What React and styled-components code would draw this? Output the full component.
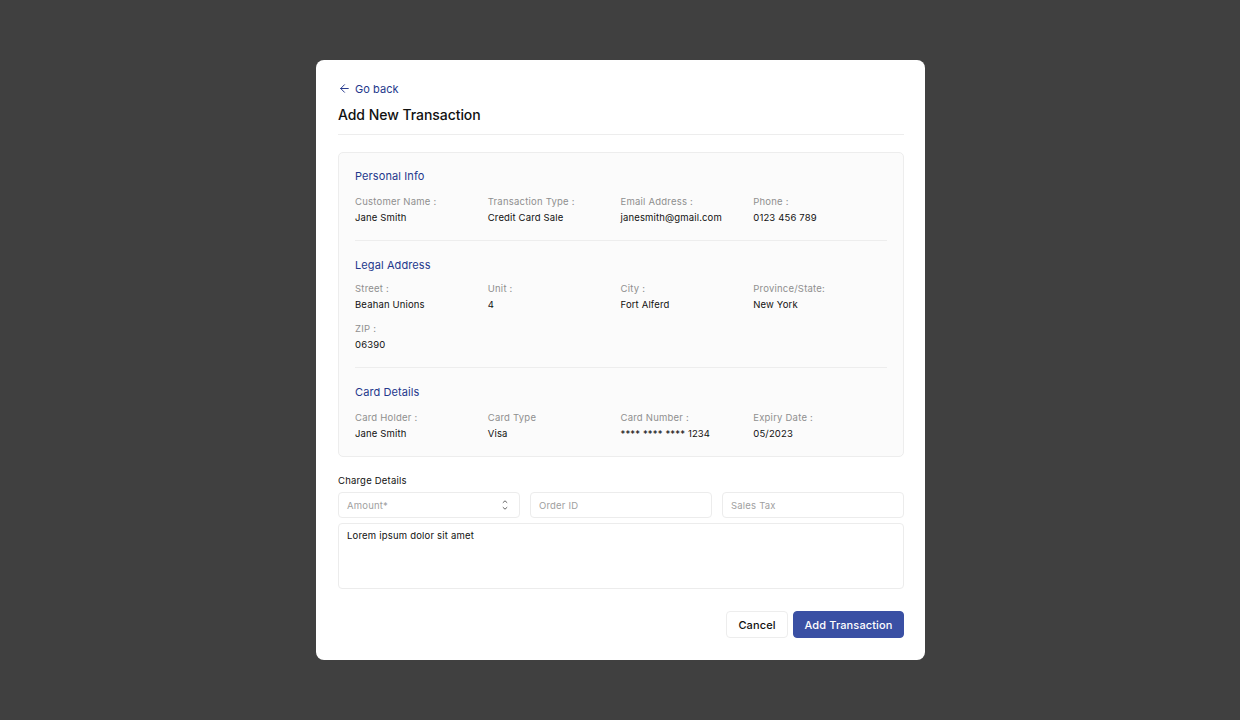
import React from 'react';
import styled, { createGlobalStyle } from 'styled-components';
import { ArrowLeft } from 'lucide-react';

const GlobalStyle = createGlobalStyle`
  html, body {
    margin: 0;
    padding: 0;
    height: 100%;
  }
  body {
    background-color: #404040;
    font-family: Inter, "Liberation Sans", sans-serif;
  }
  * {
    box-sizing: border-box;
  }
`;

const Page = styled.div`
  width: 100%;
  height: 720px;
  display: flex;
  align-items: center;
  justify-content: center;
  padding-left: 1px;
`;

const Modal = styled.div`
  width: 609px;
  height: 600px;
  background-color: #fff;
  border-radius: 8px;
  padding: 20px 21px 22px 22px;
  display: flex;
  flex-direction: column;
`;

const BackLink = styled.a`
  display: flex;
  align-items: center;
  gap: 4px;
  height: 17px;
  font-size: 11px;
  color: #24388c;
  letter-spacing: 0.05px;
`;

const Title = styled.h1`
  margin: 8px 0 0;
  font-size: 14px;
  line-height: 20px;
  font-weight: 500;
  color: #111;
  letter-spacing: -0.05px;
`;

const Divider = styled.div`
  height: 1px;
  background-color: #ededed;
  margin-top: 9px;
`;

const InfoCard = styled.div`
  margin-top: 17px;
  height: 305px;
  background-color: #fbfbfb;
  border: 1px solid #ededed;
  border-radius: 5px;
  padding: 15px 16px 0;
  display: flex;
  flex-direction: column;
`;

const SectionTitle = styled.h2`
  margin: 0;
  font-size: 11px;
  line-height: 16px;
  font-weight: 400;
  color: #24388c;
  letter-spacing: 0.1px;
`;

const FieldGrid = styled.div`
  display: grid;
  grid-template-columns: repeat(4, 132.75px);
  row-gap: 9px;
  margin-top: ${(p) => p.$top}px;
`;

const Field = styled.div`
  display: flex;
  flex-direction: column;
  gap: 2px;
`;

const Label = styled.span`
  font-size: 9.5px;
  line-height: 13px;
  color: #8f8f8f;
  letter-spacing: 0.22px;
`;

const Value = styled.span`
  font-size: 9.5px;
  line-height: 16px;
  color: #111;
  letter-spacing: 0.15px;
`;

const SectionLine = styled.div`
  height: 1px;
  background-color: #ededed;
  margin: 14px 0 16px;
`;

const ChargeLabel = styled.div`
  margin-top: 17px;
  font-size: 9.5px;
  line-height: 14px;
  color: #111;
  letter-spacing: 0.2px;
`;

const InputRow = styled.div`
  display: grid;
  grid-template-columns: 182px 182px 182px;
  justify-content: space-between;
  margin-top: 4px;
`;

const InputBox = styled.div`
  height: 26px;
  background-color: #fff;
  border: 1px solid #ececec;
  border-radius: 4px;
  padding: 0 8px;
  display: flex;
  align-items: center;
  justify-content: space-between;
  font-size: 9.5px;
  color: #a0a0a0;
  letter-spacing: 0.2px;
`;

const Stepper = styled.svg`
  width: 6px;
  height: 10px;
  margin-right: 3px;
  fill: none;
  stroke: #666;
  stroke-width: 1;
`;

const TextBox = styled.div`
  height: 66px;
  margin-top: 5px;
  background-color: #fff;
  border: 1px solid #ececec;
  border-radius: 4px;
  padding: 6px 8px;
  font-size: 9.5px;
  line-height: 12px;
  color: #111;
  letter-spacing: 0.2px;
`;

const Actions = styled.div`
  display: flex;
  justify-content: flex-end;
  gap: 5px;
  margin-top: 22px;
`;

const Button = styled.button`
  height: 27px;
  width: ${(p) => p.$width}px;
  padding: 0;
  border-radius: 4px;
  border: 1px solid ${(p) => (p.$primary ? '#3a50a4' : '#ededed')};
  background-color: ${(p) => (p.$primary ? '#3a50a4' : '#fff')};
  color: ${(p) => (p.$primary ? '#fff' : '#111')};
  font-family: inherit;
  font-size: 11px;
  font-weight: 500;
  letter-spacing: 0.12px;
`;

const sections = [
  {
    title: 'Personal Info',
    top: 11,
    fields: [
      ['Customer Name :', 'Jane Smith'],
      ['Transaction Type :', 'Credit Card Sale'],
      ['Email Address :', 'janesmith@gmail.com'],
      ['Phone :', '0123 456 789'],
    ],
  },
  {
    title: 'Legal Address',
    top: 9,
    fields: [
      ['Street :', 'Beahan Unions'],
      ['Unit :', '4'],
      ['City :', 'Fort Alferd'],
      ['Province/State:', 'New York'],
      ['ZIP :', '06390'],
    ],
  },
  {
    title: 'Card Details',
    top: 11,
    fields: [
      ['Card Holder :', 'Jane Smith'],
      ['Card Type', 'Visa'],
      ['Card Number :', '**** **** **** 1234'],
      ['Expiry Date :', '05/2023'],
    ],
  },
];

const App = () => {
  return (
    <Page>
      <GlobalStyle />
      <Modal>
        <BackLink>
          <ArrowLeft size={13} strokeWidth={1.8} />
          Go back
        </BackLink>
        <Title>Add New Transaction</Title>
        <Divider />

        <InfoCard>
          {sections.map((section, index) => (
            <React.Fragment key={section.title}>
              <SectionTitle>{section.title}</SectionTitle>
              <FieldGrid $top={section.top}>
                {section.fields.map(([label, value]) => (
                  <Field key={label}>
                    <Label>{label}</Label>
                    <Value>{value}</Value>
                  </Field>
                ))}
              </FieldGrid>
              {index < sections.length - 1 && <SectionLine />}
            </React.Fragment>
          ))}
        </InfoCard>

        <ChargeLabel>Charge Details</ChargeLabel>
        <InputRow>
          <InputBox>
            Amount*
            <Stepper viewBox="0 0 6 10">
              <path d="M0.8 2.8 L3 0.8 L5.2 2.8" />
              <path d="M0.8 7.2 L3 9.2 L5.2 7.2" />
            </Stepper>
          </InputBox>
          <InputBox>Order ID</InputBox>
          <InputBox>Sales Tax</InputBox>
        </InputRow>
        <TextBox>Lorem ipsum dolor sit amet</TextBox>

        <Actions>
          <Button $width={62}>Cancel</Button>
          <Button $primary $width={111}>Add Transaction</Button>
        </Actions>
      </Modal>
    </Page>
  );
};

export default App;
